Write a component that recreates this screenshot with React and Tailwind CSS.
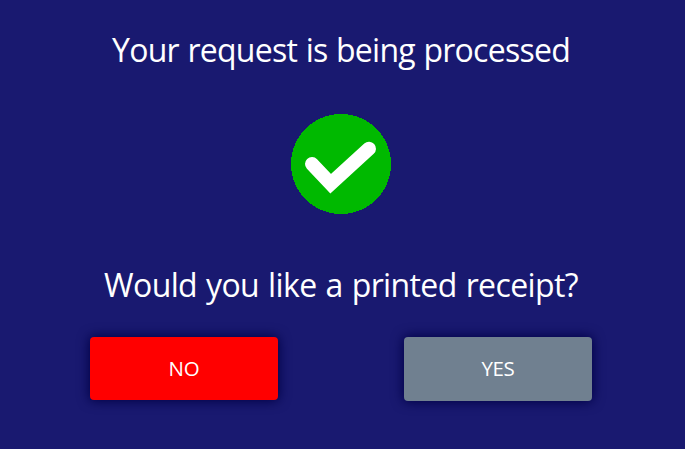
function SuccessIcon() {
  return (
    <svg className="block size-[100px]" viewBox="0 0 100 100" shapeRendering="crispEdges">
      <circle cx="50" cy="50" r="50" fill="#00b900" />
      <path
        d="M21 50 39.7 69.7 78 34.7"
        fill="none"
        stroke="white"
        strokeWidth="14"
        strokeLinecap="round"
        strokeLinejoin="miter"
        shapeRendering="auto"
      />
    </svg>
  );
}

export default function App() {
  return (
    <main className="flex h-[449px] w-[685px] flex-col items-center overflow-hidden bg-[#191970] pr-[3px] font-['Open_Sans',sans-serif] text-white">
      <h1 className="mt-[26px] h-[48px] text-[32px] leading-[48px] tracking-[-0.75px] [word-spacing:1px] whitespace-nowrap">
        Your request is being processed
      </h1>
      <div className="mt-[40px] flex justify-center">
        <SuccessIcon />
      </div>
      <h2 className="mt-[47px] h-[48px] text-[32px] leading-[48px] tracking-[-0.62px] [word-spacing:1.3px] whitespace-nowrap">
        Would you like a printed receipt?
      </h2>
      <div className="mt-[28px] flex items-start gap-[126px]">
        <button className="h-[63px] w-[188px] rounded-[4px] bg-[#ff0000] text-[20.5px] tracking-[-0.2px] shadow-[0_0_12px_1px_#000046]">NO</button>
        <button className="h-[64px] w-[188px] rounded-[4px] bg-[#708090] pb-[2px] text-[20.5px] tracking-[-0.4px] shadow-[0_0_12px_1px_#000046]">YES</button>
      </div>
    </main>
  );
}
